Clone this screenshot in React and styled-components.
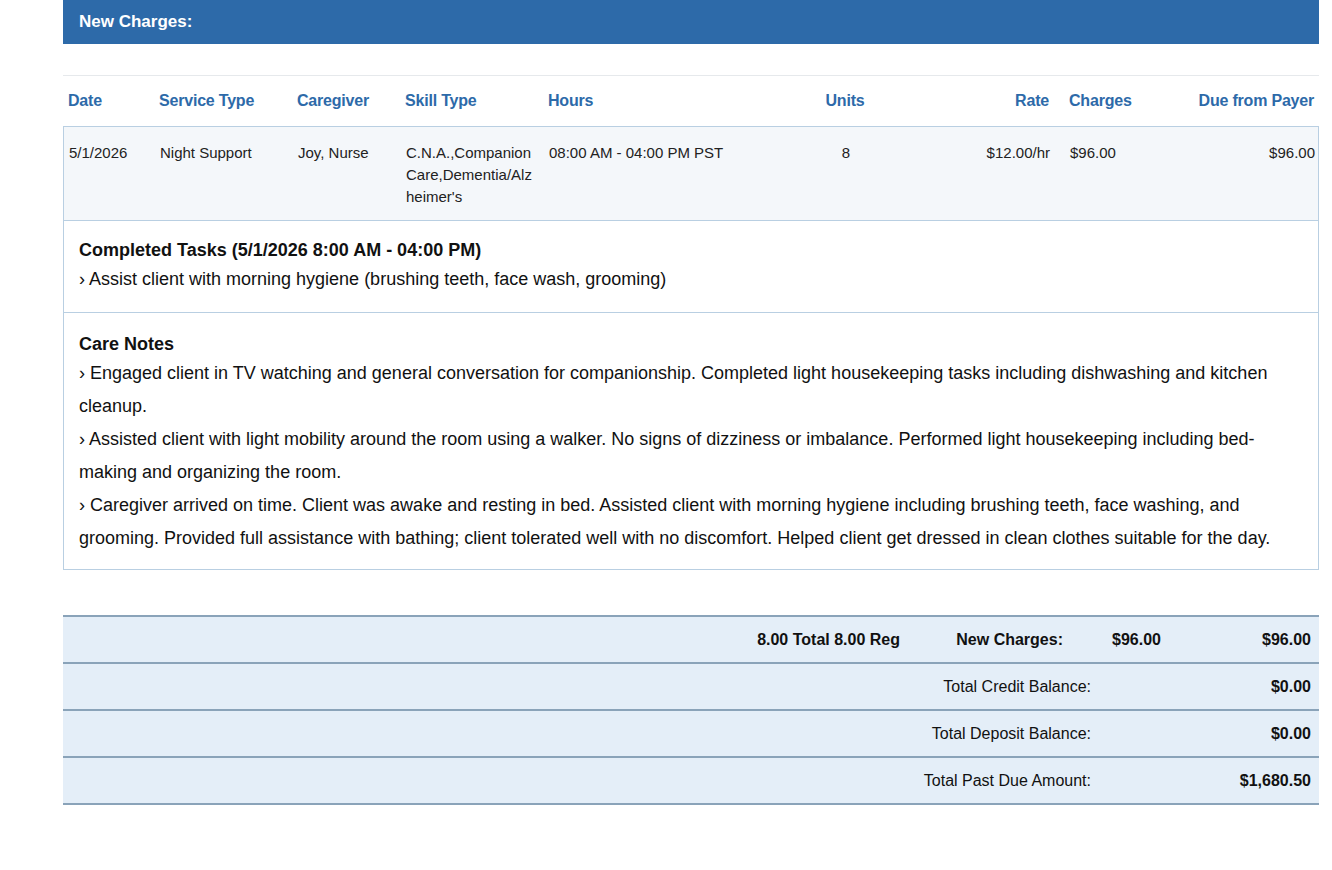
import React from "react";
import styled, { createGlobalStyle } from "styled-components";

const G = createGlobalStyle`
  body { margin:0; background:#fff; font-family:"Liberation Sans", Arial, sans-serif; color:#111; }
`;
const Wrap = styled.div`width:1256px; margin-left:63px;`;
const Bar = styled.div`height:44px; background:#2d6aa9; color:#fff; font-weight:bold; font-size:17px; display:flex; align-items:center; padding-left:16px;`;
const Rule = styled.div`margin-top:31px; height:1px; background:#e6e9ec;`;
const cols = "96px 138px 108px 143px 252px 90px 165px 105px 159px";
const Head = styled.div`display:grid; grid-template-columns:${cols}; height:50px; align-items:center; color:#2d6aa9; font-weight:bold; font-size:16px; letter-spacing:-0.2px;`;
const Cell = styled.div`padding-left:${p=>p.$pl||0}px; padding-right:${p=>p.$pr||0}px; text-align:${p=>p.$a||"left"};`;
const Skill = styled.div`width:132px; word-break:break-all;`;
const Box = styled.div`border:1px solid #b9cfe2;`;
const Row = styled.div`display:grid; grid-template-columns:${cols}; background:#f4f7fa; font-size:15px; line-height:22px; padding:15px 0 12px; color:#222;`;
const Sec = styled.div`border-top:1px solid #b9cfe2; padding:${p=>p.$p}; font-size:18px; line-height:33px; background:#fff;`;
const T = styled.div`font-weight:bold; line-height:26px;`;
const Foot = styled.div`margin-top:45px; border-top:2px solid #8aa3b9;`;
const FRow = styled.div`display:flex; justify-content:flex-end; align-items:center; height:45px; background:#e4eef8; border-bottom:2px solid #8aa3b9; font-size:16px; padding-right:8px;`;
const FC = styled.div`width:${p=>p.$w}px; text-align:${p=>p.$a||"right"}; font-weight:${p=>p.$b?"bold":"normal"};`;

export default function App(){
  const H=["Date","Service Type","Caregiver","Skill Type","Hours","Units","Rate","Charges","Due from Payer"];
  const al=[{pl:5},{},{},{},{},{a:"center"},{a:"right",pr:6},{pl:14},{a:"right",pr:5}];
  const D=["5/1/2026","Night Support","Joy, Nurse","C.N.A.,Companion Care,Dementia/Alzheimer's","08:00 AM - 04:00 PM PST","8","$12.00/hr","$96.00","$96.00"];
  return <><G/><Wrap>
    <Bar>New Charges:</Bar>
    <Rule/>
    <Head>{H.map((h,i)=><Cell key={i} $pl={al[i].pl} $pr={al[i].pr} $a={al[i].a}>{h}</Cell>)}</Head>
    <Box>
      <Row>{D.map((h,i)=><Cell key={i} $pl={al[i].pl} $pr={al[i].pr} $a={al[i].a}>{i===3?<Skill>{h}</Skill>:h}</Cell>)}</Row>
      <Sec $p="16px 15px 16px"><T>Completed Tasks (5/1/2026 8:00 AM - 04:00 PM)</T>› Assist client with morning hygiene (brushing teeth, face wash, grooming)</Sec>
      <Sec $p="18px 15px 14px"><T>Care Notes</T>
        › Engaged client in TV watching and general conversation for companionship. Completed light housekeeping tasks including dishwashing and kitchen cleanup.<br/>
        › Assisted client with light mobility around the room using a walker. No signs of dizziness or imbalance. Performed light housekeeping including bed-making and organizing the room.<br/>
        › Caregiver arrived on time. Client was awake and resting in bed. Assisted client with morning hygiene including brushing teeth, face washing, and grooming. Provided full assistance with bathing; client tolerated well with no discomfort. Helped client get dressed in clean clothes suitable for the day.
      </Sec>
    </Box>
    <Foot>
      <FRow><FC $b $w={300}>8.00 Total 8.00 Reg</FC><FC $b $w={163}>New Charges:</FC><FC $b $w={98}>$96.00</FC><FC $b $w={150}>$96.00</FC></FRow>
      <FRow><FC $w={300}>Total Credit Balance:</FC><FC $b $w={220}>$0.00</FC></FRow>
      <FRow><FC $w={300}>Total Deposit Balance:</FC><FC $b $w={220}>$0.00</FC></FRow>
      <FRow><FC $w={300}>Total Past Due Amount:</FC><FC $b $w={220}>$1,680.50</FC></FRow>
    </Foot>
  </Wrap></>;
}
